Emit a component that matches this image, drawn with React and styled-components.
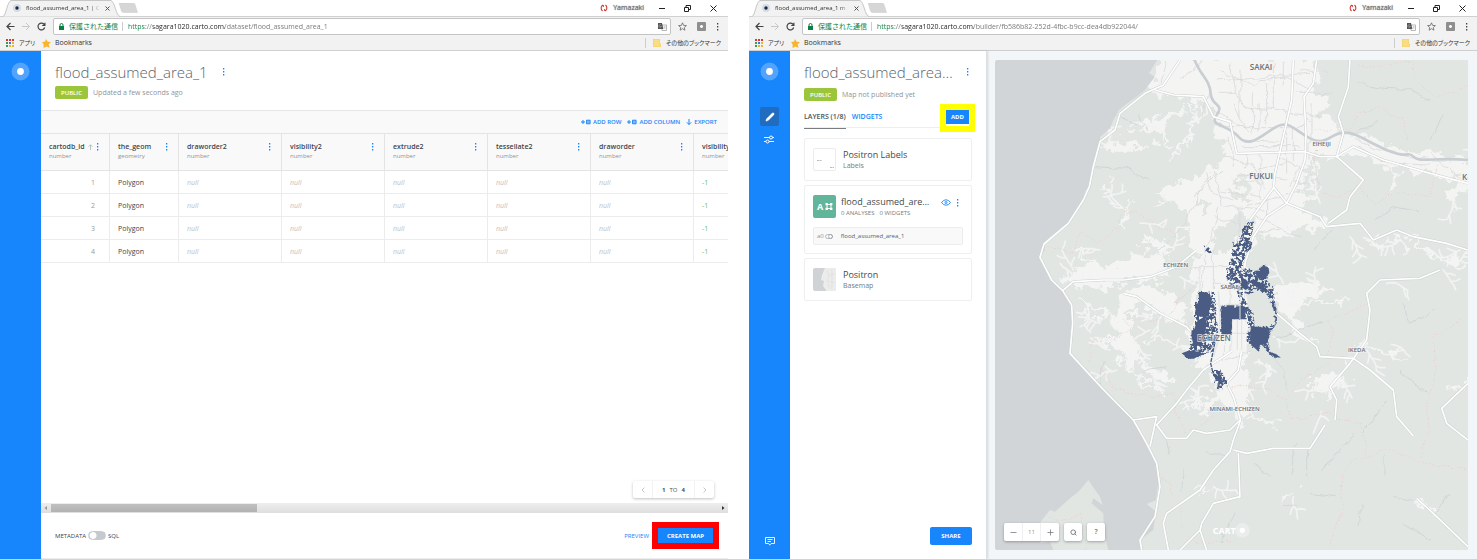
import React from 'react';
import styled, { createGlobalStyle } from 'styled-components';
import { Plus, Minus, Pencil, Search } from 'lucide-react';

const BLUE = '#1785fb';

const GlobalStyle = createGlobalStyle`
  * { box-sizing: border-box; }
  body { margin: 0; background: #fff; }
  body, button, input { font-family: "Open Sans", "Noto Sans CJK JP", sans-serif; font-size: 7px; line-height: 10px; color: #4a5459; }
  button { padding: 0; border: 0; background: none; display: inline-flex; align-items: center; justify-content: center; cursor: pointer; }
  h1, h2, h3, p, ul { margin: 0; padding: 0; font-weight: 400; }
  svg { display: block; flex: none; }
`;

/* ---------- layout ---------- */
const Screens = styled.div`
  display: grid;
  grid-template-columns: minmax(0, 1fr) minmax(0, 1fr);
  column-gap: 21px;
  min-height: 100vh;
`;
const BrowserWindow = styled.section`
  display: flex;
  flex-direction: column;
  min-width: 0;
  overflow: hidden;
`;
const Viewport = styled.div`
  flex: 1;
  display: flex;
  min-height: 0;
  background: ${p => p.$tone || '#fff'};
`;

/* ---------- browser chrome ---------- */
const TabStrip = styled.div`
  height: 16px;
  display: flex;
  align-items: center;
  padding: 0 11px 0 3px;
`;
const Tab = styled.div`
  position: relative;
  width: 117px;
  height: 17px;
  padding: 0 10px 0 10px;
  display: flex;
  align-items: center;
  gap: 5px;
`;
const TabShape = styled.svg`
  position: absolute;
  inset: 0;
`;
const TabTitle = styled.span`
  position: relative;
  flex: 1;
  white-space: nowrap;
  font-size: 6px;
  color: #333;
  mask-image: linear-gradient(90deg, #000 88%, transparent);
`;
const Favicon = styled.svg`
  position: relative;
`;
const ChromeButton = styled.button`
  position: relative;
  color: #555;
`;
const NewTabButton = styled(ChromeButton)`
  margin-left: -2px;
`;
const WindowControls = styled.div`
  margin-left: auto;
  display: flex;
  align-items: center;
  gap: 19px;
`;
const Profile = styled.button`
  gap: 5px;
  color: #777;
  text-shadow: 0 0 1px #555;
  margin-right: -5px;
`;
const AddressRow = styled.div`
  height: 20px;
  display: flex;
  align-items: center;
  gap: 7px;
  padding: 0 9px 0 6px;
  background: #f2f2f2;
  border-top: 1px solid #d0d0d0;
`;
const AddressActions = styled.div`
  display: flex;
  align-items: center;
  gap: 10px;
`;
const Omnibox = styled.label`
  flex: 1;
  min-width: 0;
  height: 17px;
  display: flex;
  align-items: center;
  gap: 5px;
  padding: 0 3px 0 5px;
  background: #fff;
  border: 1px solid #c4c4c4;
  border-radius: 2px;
`;
const Secure = styled.span`
  font-size: 7px;
  color: #0b8043;
  padding-right: 4px;
  border-right: 1px solid #ccc;
  line-height: 9px;
  white-space: nowrap;
`;
const UrlInput = styled.input`
  flex: 1;
  min-width: 0;
  border: 0;
  padding: 0;
  outline: none;
  font-size: 7px;
  color: #777;
  -webkit-text-fill-color: transparent;
  background: linear-gradient(90deg, #0b8043 0 18px, #777 18px 25px, #222 25px 97px, #747474 97px);
  background-clip: text;
  -webkit-background-clip: text;
`;
const BookmarkRow = styled.nav`
  height: 15px;
  display: flex;
  align-items: center;
  gap: 7px;
  padding: 0 7px 0 6px;
  background: #f2f2f2;
  border-bottom: 1px solid #cfcfcf;
`;
const Bookmark = styled.a`
  display: flex;
  align-items: center;
  gap: ${p => p.$gap || 5}px;
  color: #333;
  text-decoration: none;
  font-size: ${p => p.$size || 7}px;
  font-feature-settings: "palt";
`;
const OtherBookmarks = styled.div`
  margin-left: auto;
  padding-left: 7px;
  border-left: 1px solid #ccc;
`;

/* ---------- shared app parts ---------- */
const Rail = styled.aside`
  width: 41px;
  flex: none;
  background: ${BLUE};
  display: flex;
  flex-direction: column;
  align-items: center;
  padding: 11px 0 8px;
`;
const RailButton = styled.button`
  width: 19px;
  height: 19px;
  border-radius: 2px;
  color: #fff;
  background: ${p => (p.$active ? '#1f6cc0' : 'transparent')};
  margin-top: ${p => p.$top || 'auto'};
`;
const Title = styled.h1`
  font-size: 15px;
  line-height: 20px;
  font-weight: 300;
  color: #5a6469;
  white-space: nowrap;
  overflow: hidden;
  text-overflow: ellipsis;
`;
const TitleRow = styled.div`
  display: flex;
  align-items: center;
  gap: ${p => p.$gap}px;
  padding-right: 3px;
`;
const MetaRow = styled.div`
  display: flex;
  align-items: center;
  gap: 5px;
  margin-top: ${p => p.$top}px;
  color: #8e9599;
  white-space: nowrap;
`;
const Badge = styled.span`
  width: 33px;
  height: 13px;
  display: flex;
  align-items: center;
  justify-content: center;
  border-radius: 2px;
  background: #9bc63b;
  color: #fff;
  font-size: 6px;
  font-weight: 600;
`;
const SolidButton = styled.button`
  background: ${BLUE};
  color: #fff;
  font-size: ${p => p.$size || 6}px;
  font-weight: 700;
  width: ${p => p.$w}px;
  height: ${p => p.$h}px;
  border-radius: ${p => p.$radius || 0}px;
`;
const Highlight = styled.div`
  border: 6px solid ${p => p.$color};
  padding-bottom: ${p => p.$below || 0}px;
  background: #fff;
  display: flex;
`;
const IconButton = styled.button`
  color: ${BLUE};
`;

/* ---------- dataset page ---------- */
const Dataset = styled.main`
  flex: 1;
  min-width: 0;
  display: flex;
  flex-direction: column;
`;
const DatasetHeader = styled.header`
  height: 59px;
  padding: 11px 14px 0;
`;
const ActionBar = styled.div`
  height: 23px;
  display: flex;
  align-items: center;
  justify-content: flex-end;
  gap: 6px;
  padding-right: 11px;
  background: #f9f9f9;
  border-top: 1px solid #e6e6e6;
`;
const Action = styled.button`
  gap: 2px;
  color: ${BLUE};
  font-size: 6px;
  font-weight: 600;
`;
const TableArea = styled.div`
  flex: 1;
  min-height: 0;
  overflow: hidden;
  display: flex;
  flex-direction: column;
  align-items: flex-start;
`;
const DataTable = styled.table`
  table-layout: fixed;
  border-collapse: separate;
  border-spacing: 0;
  width: 756px;
`;
const HeadCell = styled.th`
  height: 38px;
  padding: 1px 10px 3px 8px;
  text-align: left;
  font-weight: 400;
  background: #f9f9f9;
  border: solid #e4e4e4;
  border-width: 1px 1px 1px 0;
`;
const HeadTop = styled.div`
  display: flex;
  align-items: center;
  justify-content: space-between;
`;
const ColumnName = styled.span`
  font-weight: 600;
  color: #3c464b;
  display: flex;
  align-items: center;
  gap: 3px;
`;
const ColumnType = styled.div`
  font-size: 6px;
  line-height: 9px;
  color: #8f9494;
`;
const Cell = styled.td`
  height: 23px;
  padding: 1px 8px 0;
  border: solid #ececec;
  border-width: 0 1px 1px 0;
  text-align: ${p => (p.$kind === 'id' ? 'right' : 'left')};
  padding-right: ${p => (p.$kind === 'id' ? 14 : 8)}px;
  font-style: ${p => (p.$kind === 'null' ? 'italic' : 'normal')};
  color: ${p => ({ id: '#969b9b', geom: '#3c464b', null: '#bfc2c4', num: '#5cc068' }[p.$kind])};
`;
const Pager = styled.div`
  margin: auto 14px 5px auto;
  display: flex;
  height: 17px;
  border-radius: 2px;
  background: #fff;
  box-shadow: 0 1px 3px rgba(0, 0, 0, 0.25);
`;
const PagerButton = styled.button`
  width: 19px;
  color: #b5babd;
`;
const PagerLabel = styled.span`
  width: 43px;
  border: solid #f2f2f2;
  border-width: 0 1px;
  display: flex;
  align-items: center;
  justify-content: center;
  gap: 4px;
  font-size: 6px;
`;
const ScrollTrack = styled.div`
  height: 10px;
  display: flex;
  align-items: center;
  padding: 0 3px;
  gap: 3px;
  background: linear-gradient(#eee, #dedede);
`;
const ScrollThumb = styled.div`
  flex: 31 1 0;
  height: 8px;
  background: linear-gradient(#c0c0c0, #b2b2b2);
`;
const ScrollRest = styled.div`
  flex: 69 1 0;
`;
const Footer = styled.footer`
  height: 46px;
  display: flex;
  align-items: center;
  padding: 0 9px 0 14px;
  font-size: 6px;
  border-bottom: 1px solid #ececec;
`;
const ToggleLabel = styled.label`
  display: flex;
  align-items: center;
  gap: 2px;
  font-weight: 500;
  color: #3c464b;
`;
const Toggle = styled.input`
  appearance: none;
  margin: 0;
  width: 18px;
  height: 9px;
  border-radius: 5px;
  border: 1px solid #c6cace;
  background: radial-gradient(circle at 4px 50%, #fff 3px, #c6cace 4px);
`;
const PreviewLink = styled.a`
  margin: 0 3px 0 auto;
  color: ${BLUE};
  text-decoration: none;
`;

/* ---------- builder page ---------- */
const Panel = styled.main`
  width: 197px;
  flex: none;
  display: flex;
  flex-direction: column;
  align-items: stretch;
  padding: 11px 14px 14px;
  background: #fff;
  border-right: 1px solid #dde0e3;
  box-shadow: 1px 0 2px rgba(0, 0, 0, 0.12);
`;
const Tabs = styled.div`
  display: flex;
  align-items: center;
  height: 28px;
  margin: 3px -3px 6px 0;
  background: linear-gradient(#eeeeee, #eeeeee) 0 23px / 100% 1px no-repeat;
`;
const TabButton = styled.button`
  align-self: flex-start;
  height: 25px;
  margin-right: 6px;
  padding: 3px 0 1px;
  font-weight: 600;
  color: ${p => (p.$active ? '#4a5459' : BLUE)};
  border-bottom: 1px solid ${p => (p.$active ? '#777d80' : 'transparent')};
`;
const Spacer = styled.span`
  flex: 1;
`;
const LayerList = styled.ul`
  list-style: none;
  display: flex;
  flex-direction: column;
  gap: 4px;
`;
const LayerCard = styled.li`
  border: 1px solid #eeeff0;
  border-radius: 2px;
  padding: 8px;
`;
const LayerHead = styled.div`
  display: flex;
  align-items: center;
  gap: ${p => p.$gap || 7}px;
  min-height: 25px;
`;
const LayerText = styled.div`
  flex: 1;
  min-width: 0;
`;
const LayerName = styled.h2`
  font-size: 9px;
  line-height: 13px;
  color: #3f494e;
  white-space: nowrap;
  overflow: hidden;
  text-overflow: ellipsis;
`;
const LayerNote = styled.p`
  font-size: ${p => p.$size || 7}px;
  line-height: 10px;
  color: #747c80;
  display: flex;
  gap: 5px;
  white-space: nowrap;
`;
const LayerIcons = styled.div`
  display: flex;
  align-items: center;
  gap: 5px;
  align-self: flex-start;
  height: 17px;
  padding: 0 4px 0 5px;
`;
const SourceRow = styled.button`
  width: 150px;
  height: 18px;
  margin-top: 8px;
  padding: 0 3px;
  justify-content: flex-start;
  gap: 8px;
  font-size: 6px;
  color: #555f64;
  background: #f9f9f9;
  border: 1px solid #ececec;
  border-radius: 2px;
`;
const SourceTag = styled.span`
  display: flex;
  align-items: center;
  gap: 1px;
  color: #8e9599;
`;
const PanelFooter = styled.div`
  display: flex;
  justify-content: flex-end;
  margin-top: auto;
`;
const MapFrame = styled.div`
  position: relative;
  flex: 1;
  margin: 9px 9px 9px 8px;
  border-radius: 2px;
  overflow: hidden;
  background: #d1d5d8;
  display: flex;
  align-items: flex-end;
`;
const MapDrawing = styled.svg`
  position: absolute;
  inset: 0;
  width: 100%;
  height: 100%;
`;
const MapControls = styled.div`
  position: relative;
  display: flex;
  gap: 5px;
  padding: 0 0 9px 9px;
`;
const ControlGroup = styled.div`
  display: flex;
  height: 18px;
  background: #fff;
  border-radius: 2px;
  box-shadow: 0 1px 3px rgba(0, 0, 0, 0.3);
`;
const ControlButton = styled.button`
  width: 18px;
  color: #6d757a;
  font-size: 7px;
  font-weight: 600;
`;
const ZoomLevel = styled.span`
  width: 19px;
  display: flex;
  align-items: center;
  justify-content: center;
  font-size: 6px;
  color: #8e9599;
  border: solid #f0f0f0;
  border-width: 0 1px;
`;

/* ---------- icons ---------- */
const Line = ({ d, w = 10, h = w, sw = 1, color = 'currentColor', fill = 'none' }) => (
  <svg width={w} height={h} viewBox={`0 0 ${w} ${h}`} fill={fill} stroke={color} strokeWidth={sw}>
    <path d={d} />
  </svg>
);
const Kebab = ({ color = BLUE }) => (
  <svg width="3" height="8" viewBox="0 0 3 8" fill={color}>
    <rect x="1" y="0" width="1.3" height="1.5" /><rect x="1" y="3" width="1.3" height="1.5" /><rect x="1" y="6" width="1.3" height="1.5" />
  </svg>
);
const GridPlus = () => (
  <svg width="10" height="6" viewBox="0 0 10 6" fill="none" stroke="currentColor">
    <path d="M0 3h4M2 1v4" /><path d="M5.500 1.200h3.600v3.600h-3.600z" fill="currentColor" fillOpacity=".55" strokeWidth=".9" />
  </svg>
);
const CartoMark = () => (
  <svg width="19" height="19" viewBox="0 0 19 19" fill="#fff">
    <circle cx="9.5" cy="9.5" r="9" fillOpacity=".25" /><circle cx="9.5" cy="9.5" r="3.4" />
  </svg>
);

function BrowserChrome({ tab, tail, url }) {
  return (
    <header>
      <TabStrip>
        <Tab>
          <TabShape width="117" height="17" viewBox="0 0 117 17">
            <path d="M0 16.5C3 16 4 2 8 .5H108C112 2 113 16 117 16.5" fill="#f2f2f2" stroke="#c6c6c6" />
          </TabShape>
          <Favicon width="8" height="8" viewBox="0 0 8 8"><circle cx="4" cy="4" r="4" fill="#d5dbe3" /><circle cx="4" cy="4" r="1.7" fill="#162945" /></Favicon>
          <TabTitle>{tab}{tail}</TabTitle>
          <ChromeButton aria-label="Close tab"><Line w={5} d="M.5.5l4 4m0-4l-4 4" /></ChromeButton>
        </Tab>
        <NewTabButton aria-label="New tab">
          <svg width="20" height="10" viewBox="0 0 20 10"><path d="M1 0H15Q16.500 0 17 1.500L19.500 9.500H5.500Q4 9.500 3.500 8Z" fill="#d6d6d6" stroke="#ccc" strokeWidth=".5" /></svg>
        </NewTabButton>
        <WindowControls>
          <Profile>
            <svg width="8" height="8" viewBox="0 0 8 8" fill="none" stroke="#d23a32" strokeWidth="1.1"><path d="M3 1C.6 1.800.6 5.500 2.500 7M5 7C7.400 6.200 7.400 2.500 5.500 1M3.300 3V1M4.700 5v2" /></svg>
            Yamazaki
          </Profile>
          <ChromeButton aria-label="Minimize"><Line w={7} d="M1 3.500h6" color="#222" /></ChromeButton>
          <ChromeButton aria-label="Restore"><Line w={7} d="M.5 2.500h4v4h-4zM2 2.500v-2h4.500v4H4.500" color="#222" /></ChromeButton>
          <ChromeButton aria-label="Close"><Line w={7} d="M.5.5l6 6m0-6l-6 6" color="#222" /></ChromeButton>
        </WindowControls>
      </TabStrip>
      <AddressRow>
        <ChromeButton aria-label="Back"><Line w={9} d="M8.500 4.500H1M4.500 1L1 4.500l3.500 3.500" sw={1.2} color="#444" /></ChromeButton>
        <ChromeButton aria-label="Forward"><Line w={8} h={9} d="M0 4.500h7M4 1l3.500 3.500L4 8" color="#c8c8c8" /></ChromeButton>
        <ChromeButton aria-label="Reload"><Line w={9} d="M7.300 2.700A3.400 3.400 0 1 0 7.700 5.500M7.900.8v2.700H5.200" sw={1.2} color="#444" /></ChromeButton>
        <Omnibox>
          <svg width="5" height="7" viewBox="0 0 5 7"><path d="M1 3V2a1.500 1.500 0 0 1 3 0v1" fill="none" stroke="#0b8043" /><rect y="3" width="5" height="4" fill="#0b8043" /></svg>
          <Secure>保護された通信</Secure>
          <UrlInput aria-label="Address" defaultValue={url} />
          <svg width="9" height="8" viewBox="0 0 9 8"><rect x="4" y="2" width="4.500" height="5.500" fill="#fff" stroke="#999" strokeWidth=".7" /><path d="M0 0h4l1.300 6H0z" fill="#555" /><path d="M3.200 2.200a1.300 1.300 0 1 0 .2 1.300H2.300M5.500 4h2.500M6.700 3.200L5.800 6M6 4.500l1.500 1.500" fill="none" stroke="#bbb" strokeWidth=".6" /></svg>
        </Omnibox>
        <AddressActions>
          <ChromeButton aria-label="Bookmark this page"><Line w={9} d="M4.500.8l1.100 2.600 2.800.2-2.100 1.900.6 2.700-2.400-1.500-2.400 1.500.6-2.700L.6 3.600l2.800-.2z" sw={.8} color="#666" /></ChromeButton>
          <ChromeButton aria-label="Extension"><svg width="9" height="9" viewBox="0 0 9 9"><rect width="9" height="9" rx="1" fill="#8f8f8f" /><path d="M4.500 3v3M3 4.500h3" stroke="#fff" strokeWidth="1.600" /></svg></ChromeButton>
          <ChromeButton aria-label="Menu"><Kebab color="#444" /></ChromeButton>
        </AddressActions>
      </AddressRow>
      <BookmarkRow>
        <Bookmark href="#apps" $size={6}>
          <svg width="8" height="8" viewBox="0 0 8 8">
            {['#d83a2f', '#d83a2f', '#d83a2f', '#30a058', '#3a78d8', '#eab52a', '#30a058', '#eab52a', '#eab52a'].map((c, i) => (
              <rect key={i} x={(i % 3) * 3} y={Math.floor(i / 3) * 3} width="2" height="2" fill={c} />
            ))}
          </svg>
          アプリ
        </Bookmark>
        <Bookmark href="#bookmarks" $gap={4}>
          <svg width="9" height="9" viewBox="0 0 9 9"><path d="M4 0l1.600 2.700 3.400.2-2.300 2.400L7.500 8.800 4.400 7.400 1.500 9l.2-3.500L0 3.300l3.100-.7z" fill="#f9b42b" /></svg>
          Bookmarks
        </Bookmark>
        <OtherBookmarks>
          <Bookmark href="#other" $size={6}>
            <svg width="8" height="8" viewBox="0 0 8 8"><path d="M.5 0h6v4l1 1v3h-7z" fill="#fbdc7f" stroke="#efc95c" strokeWidth=".6" /></svg>
            その他のブックマーク
          </Bookmark>
        </OtherBookmarks>
      </BookmarkRow>
    </header>
  );
}

/* ---------- dataset ---------- */
const columns = [
  ['cartodb_id', 'number', 'id', 69], ['the_geom', 'geometry', 'geom', 69], ['draworder2', 'number', 'null', 103],
  ['visibility2', 'number', 'null', 103], ['extrude2', 'number', 'null', 103], ['tessellate2', 'number', 'null', 103],
  ['draworder', 'number', 'null', 103], ['visibility', 'number', 'num', 103],
];
const cellText = (kind, row) => ({ id: row, geom: 'Polygon', null: 'null', num: '-1' }[kind]);

function DatasetPage() {
  return (
    <Viewport>
      <Rail><CartoMark /></Rail>
      <Dataset>
        <DatasetHeader>
          <TitleRow $gap={14}>
            <Title>flood_assumed_area_1</Title>
            <IconButton aria-label="Dataset options"><Kebab /></IconButton>
          </TitleRow>
          <MetaRow $top={4}><Badge>PUBLIC</Badge>Updated a few seconds ago</MetaRow>
        </DatasetHeader>
        <ActionBar>
          <Action><GridPlus />ADD ROW</Action>
          <Action><GridPlus />ADD COLUMN</Action>
          <Action><Line w={6} d="M3 0v5.500M.8 3.300L3 5.500l2.200-2.200" />EXPORT</Action>
        </ActionBar>
        <TableArea>
          <DataTable>
            <colgroup>{columns.map(c => <col key={c[0]} style={{ width: c[3] }} />)}</colgroup>
            <thead>
              <tr>
                {columns.map(([name, type, kind]) => (
                  <HeadCell key={name} scope="col">
                    <HeadTop>
                      <ColumnName>{name}{kind === 'id' && <Line w={5} h={6} d="M2.500 6V.8M.5 2.800l2-2 2 2" sw={.7} color="#a5aaad" />}</ColumnName>
                      <IconButton aria-label={`${name} options`}><Kebab /></IconButton>
                    </HeadTop>
                    <ColumnType>{type}</ColumnType>
                  </HeadCell>
                ))}
              </tr>
            </thead>
            <tbody>
              {[1, 2, 3, 4].map(row => (
                <tr key={row}>{columns.map(([name, , kind]) => <Cell key={name} $kind={kind}>{cellText(kind, row)}</Cell>)}</tr>
              ))}
            </tbody>
          </DataTable>
          <Pager>
            <PagerButton aria-label="Previous page"><Line w={4} h={6} d="M3.500.5L1 3l2.500 2.500" sw={.8} /></PagerButton>
            <PagerLabel><b>1</b><span>TO</span><b>4</b></PagerLabel>
            <PagerButton aria-label="Next page"><Line w={4} h={6} d="M.5.5L3 3 .5 5.500" sw={.8} /></PagerButton>
          </Pager>
        </TableArea>
        <ScrollTrack>
          <svg width="4" height="4" viewBox="0 0 4 4"><path d="M3 0v4L.5 2z" fill="#999" /></svg>
          <ScrollThumb />
          <ScrollRest />
          <svg width="4" height="4" viewBox="0 0 4 4"><path d="M1 0v4l2.500-2z" fill="#333" /></svg>
        </ScrollTrack>
        <Footer>
          <ToggleLabel>METADATA<Toggle type="checkbox" />SQL</ToggleLabel>
          <PreviewLink href="#preview">PREVIEW</PreviewLink>
          <Highlight $color="#ff0000"><SolidButton $w={55} $h={15} $size={6}>CREATE MAP</SolidButton></Highlight>
        </Footer>
      </Dataset>
    </Viewport>
  );
}

/* ---------- map ---------- */
const land = 'M472 30L447 70 465 80 435 120 410 140 375 165 357 180 340 210 330 235 300 262 298 300 285 320 280 350 272 400 255 425 245 465 205 520 150 560 132 580 135 600 120 620 130 650 155 692 188 722 215 760 220 800 212 840 210 910 250 960 300 1010 345 1060 400 1105 420 1150 440 1190 470 1240 475 1300 468 1350 440 1362 468 1385 460 1440 420 1470 430 1500H1410V20H472Z';
const peninsula = 'M160 1500L150 1475 120 1480 128 1460 110 1430 150 1380 165 1385 210 1345 235 1325 265 1290 300 1340 308 1365 280 1345 275 1360 310 1390 312 1450 325 1500Z';
const plains = [
  'M472 20H950L945 105 965 130 985 170 950 190 1010 215 1035 245 1100 262 1200 300 1300 315 1410 318V400L1290 370 1150 350 1060 310 1010 320 920 330 900 420 935 455 910 485 985 520 960 540 880 530 820 560 770 560 745 620 735 720 760 800 750 860 725 900 750 1000 735 1130 700 1080 640 1030 630 960 560 920 570 810 590 740 575 600 560 520 590 450 510 450 620 380 670 320 660 250 640 170 560 150 500 145 465 120 430 130 470 80Z',
  'M465 430L560 390 650 370 700 440 640 520 590 560 540 470Z',
  'M190 680L260 640 330 650 420 600 470 620 520 660 480 700 400 690 320 710 230 720Z',
  'M350 730L420 700 520 740 560 790 520 820 430 760 380 780 400 860 440 930 380 940 350 880Z',
  'M420 940L500 960 520 1000 450 990Z M590 1100L660 1020 690 1020 630 1080Z M470 560L500 570 480 660Z',
  'M830 720L900 690 990 720 930 740 880 810 950 880 900 870 850 800Z',
  'M930 1000L1000 960 1050 1000 1000 1010 990 1060 970 1020Z',
  'M1100 570L1170 560 1140 590 1150 610Z M1330 450L1404 370 1404 400 1350 470Z M1360 600l40 20-60 40Z',
  'M395 240L470 200 560 180 500 220 480 280 450 240Z M300 290L380 270 450 290 360 310Z',
];
const valleys = 'M560 160L590 180 560 280 510 330M460 190L500 280 520 290M310 430L330 390M390 450L370 560M300 650L220 590M240 740L300 800 380 790 450 800M340 780L350 860 290 870M350 870L360 930 450 940M380 940L420 1000 500 1020M560 900L480 860 440 870M620 1040L560 1080M700 1060L760 1060M730 1110L830 1120M760 940L820 970M1000 1010L930 1030M1040 940L1090 880 1220 930M1220 550L1310 620M860 760L980 750 1050 750M1360 1020L1404 1000M1180 550L1230 610M1240 1345L1310 1400M950 300L930 420M1190 360L1170 430M1280 610L1400 650M470 470L500 450M430 560L500 610M650 550L720 540M580 1330L640 1310M850 1360L890 1320';
const majorRoads = [
  'M540 30L490 105 435 130 360 190 345 240 300 275 280 350 268 410 250 450 205 520 132 582 120 622 155 690 188 722 215 765 218 820 210 910 300 1008 400 1110 440 1180 470 1240 480 1310 465 1400 420 1470 425 1500',
  'M880 30L875 150 850 260 825 370 820 415 750 510M950 30L940 100 912 140 918 250 915 330 890 400 860 460 800 500 760 560 735 640 730 760 725 900 715 960 680 1000 700 1040 722 1110 700 1170 690 1205 640 1260 600 1320 500 1390 490 1420 505 1500',
  'M465 120L520 135 610 140 640 200 690 215 710 310 915 305 960 320 1010 320 1060 290 1150 330 1290 370 1404 400',
  'M820 410L860 460 960 500 980 530 1080 520 1120 570 1190 540 1240 560 1340 580 1404 600',
  'M1050 30L1045 110 1015 200 1030 250 1010 320 1090 390 1050 440 1040 480 985 520',
  'M700 900L610 960 560 1020 530 1060 470 1125 500 1165 560 1165 580 1140 620 1150 690 1140 720 1110',
  'M400 1110L470 1100 450 1190M188 722L220 695 310 690 370 690 450 680 530 650 590 600',
  'M370 730L410 740 480 790 560 830 600 880M830 790L900 850 950 890 960 920 1060 925 1110 960 1180 1020 1190 1100 1240 1158',
  'M1140 690L1100 730 1110 780 1100 870 1050 940 990 1010 1010 1050 1005 1110M1140 690L1260 685 1320 660M700 1200L740 1210 820 1195 930 1195 975 1125M715 1210L720 1340 640 1360 605 1420 600 1440 620 1500M600 1440L540 1500',
  'M1404 1000L1325 1075 1340 1120 1404 1170M1250 1345L1300 1390 1404 1490',
];
const minorRoads = [
  'M650 130L710 130 740 170 870 190 960 200M660 60L770 110 780 90 860 80 930 120M700 160L735 230M620 130L610 200M760 130V250M800 100V220M730 270L850 280M740 310V350M780 310V450M830 320L900 350 870 410M640 360L670 470 790 480M670 320L750 340 800 420M620 370L640 430 700 450M580 440L640 370M480 600L560 520 600 420 660 360M600 770L620 590 640 540 660 470M580 650H680M600 650V790M640 600V720M670 770V930M690 690V900M640 700L750 700M600 760H740M610 820H740M500 30L480 100M540 90L620 30M850 30V110M900 60L990 70M690 40L710 130M780 160V240M680 230L910 230M860 190V370M720 370L860 390M900 420L740 470M760 500L900 560M700 560L840 540M715 500V640M590 700L520 760M780 860L850 960 860 1020M680 930L760 900M650 90L930 70M720 60V200M820 40V180M640 180L760 250M690 260L700 350M730 290H900M860 340L760 360M700 400L820 380M660 420L780 440M720 470V560M800 440V520M640 500L720 520M880 230V330M890 130H1000M930 160V330',
  'M1060 270L1180 310 1290 330 1404 330M1070 290L1170 340 1290 345M1290 310L1390 390M940 320L960 420M920 400L880 400M1010 210L1090 280',
];
const streams = 'M420 200L440 240M290 350L400 360 450 390M340 190L410 230M1080 100L1130 110 1210 115 1290 150M1330 200L1290 270M1070 250L1130 210M820 870L970 810M1130 510L1180 470 1260 485M940 600L990 540M1210 760L1230 820 1310 780M1090 1150L1160 1050M870 1270L890 1180M960 1270L1060 1150M760 1240L810 1280M920 1330L1010 1340M1180 1340L1240 1350M1310 1400L1350 1330M1210 1420L1290 1470M660 1480L710 1380M430 960L500 950M310 930L300 1010M500 1170L510 1220M550 1260L545 1320M620 1200L680 1220M1200 960L1280 1030M1090 1370L1080 1430M1155 1220V1280M890 1360L850 1370M920 1200V1280';
const borders = 'M1070 40L1110 55 1170 40 1240 40 1250 90 1310 140 1404 110M1040 250L1080 190 1140 170 1210 210 1220 270 1190 300M920 210L940 240 1000 240M950 300L930 380 960 430 1010 440 1070 410 1130 460 1200 420 1290 440 1310 340M135 590L220 610 240 540 290 580 360 530 370 470 440 510 520 550 570 590M270 930L280 870 400 840 370 810 500 810 540 740M300 950L340 1010 420 1040 520 1030 550 1150 640 1100M690 1010L780 1010 860 1050 900 990 980 940 1000 850 980 810 1100 770M860 1050L870 1110 970 1090 1080 1120 1100 1220M990 1480L1030 1370 1020 1290 1040 1250 1100 1220 1160 1195 1240 1230 1280 1240 1404 1260M1260 1220L1290 1120 1280 1050 1310 970 1300 860 1390 810M130 1400L200 1410 240 1390 255 1500M470 1280L510 1300 550 1430 580 1480 700 1470';
const rivers = 'M583 28C600 75 630 90 632 130S675 160 650 195 680 220 715 260 790 250 830 230 880 240 930 265 990 250 1030 248 1090 270 1160 300 1220 300 1240 320 1300 320 1404 330';
const floods = [
  'M745 515L762 515 758 545 750 570 757 580 738 610 730 640 722 665 730 690 700 715 680 690 682 650 695 630 700 580 720 565 730 535Z',
  'M700 660L740 655 770 665 795 640 808 660 800 690 820 710 825 760 832 785 820 780 805 735 780 720 740 735 730 720 705 715Z',
  'M610 585L625 595 637 605 630 612 618 602Z',
  'M705 690L722 700 735 750 760 790 765 840 748 830 740 790 722 760Z',
  'M595 725L645 725 650 800 655 850 640 900 600 920 560 925 545 910 570 900 575 860 575 835 585 830 585 760 597 750Z',
  'M660 770L735 765 738 805 697 808 697 855 664 852Z',
  'M735 850L755 840 765 830 810 830 825 815 822 790 832 785 830 820 812 850 805 880 812 905 842 922 825 925 795 895 785 885 778 905 752 885 735 870Z',
  'M636 960L660 960 680 990 684 1010 670 1000 667 1018 655 1015 643 990Z',
];
const solids = [
  'M597 727H622V732H630L634 765 626 780 628 800H600L600 793H587V762H594V752H597Z',
  'M664 768L680 770V766H703V774L722 766 735 770V804H740V808L696 808 694 852 666 854 664 820Z',
  'M752 835L768 830 806 834 808 860 800 880 780 885 776 905 755 885 750 865Z',
  'M765 662L785 662 790 645 806 655 808 670 795 682 790 690 770 680Z',
  'M590 815L612 800 620 812 616 850 605 880 590 888 580 885 575 860 575 843 582 840Z',
  'M545 910L565 902 600 905 610 914 595 918 582 926 565 926Z',
  'M733 590L740 560 748 580ZM738 610L754 578 754 595Z',
  'M722 680L740 690 745 715 735 720 725 705ZM748 695L765 690 790 705 800 725 780 718Z',
  'M652 970L664 975 664 1000 656 1006Z',
  'M792 892L806 905 828 912 842 923 830 922 812 914Z',
];
const labels = [
  [783, 59, 24, 'SAKAI'], [783, 386, 24, 'FUKUI'], [965, 288, 18, 'EIHEIJI'], [527, 651, 18, 'ECHIZEN'], [689, 717, 18, 'SABAE'],
  [642, 874, 24, 'ECHIZEN'], [1070, 907, 18, 'IKEDA'], [704, 1084, 18, 'MINAMI-ECHIZEN'],
];

/* Small branching valleys that fan out from points in the hills. */
function branchingValleys(starts) {
  let seed = 11;
  const rnd = () => { seed = (seed * 16807) % 2147483647; return seed / 2147483647; };
  let d = '';
  const grow = (x, y, angle, steps) => {
    d += `M${Math.round(x)} ${Math.round(y)}`;
    for (let i = 0; i < steps; i += 1) {
      angle += (rnd() - 0.5) * 0.9;
      x += Math.cos(angle) * 14;
      y += Math.sin(angle) * 14;
      d += `L${Math.round(x)} ${Math.round(y)}`;
      if (steps > 2 && rnd() > 0.35) {
        grow(x, y, angle + (rnd() > 0.5 ? 1 : -1), steps - 3);
        d += `M${Math.round(x)} ${Math.round(y)}`;
      }
    }
  };
  starts.forEach(([x, y]) => grow(x, y, rnd() * 6.28, 5));
  return d;
}
const twigs = branchingValleys([
  [560, 220], [480, 240], [320, 300], [310, 440], [380, 480], [420, 520], [300, 600], [220, 660], [260, 760], [300, 820], [330, 900],
  [400, 880], [450, 840], [500, 780], [520, 900], [400, 960], [460, 980], [350, 960], [540, 1060], [600, 1080], [240, 700], [180, 640],
  [520, 600], [540, 680], [460, 740], [850, 700], [900, 780], [950, 720], [880, 560], [800, 940], [760, 1050], [760, 1100], [980, 1020],
  [1030, 980], [1100, 900], [1150, 600], [1200, 570], [1370, 640], [1380, 600], [1360, 440], [1390, 300], [960, 460], [1160, 700],
  [640, 1310], [880, 1340], [1330, 660], [820, 860], [940, 1150], [470, 1350], [200, 1350], [290, 1350], [1230, 920], [1050, 560],
]);

function RegionMap() {
  return (
    <MapDrawing viewBox="-15 30 1419 1470" preserveAspectRatio="xMidYMid slice">
      <defs>
        <filter id="rugged" x="-5%" y="-5%" width="110%" height="110%">
          <feTurbulence type="fractalNoise" baseFrequency="0.03" numOctaves="4" seed="4" />
          <feDisplacementMap in="SourceGraphic" scale="75" xChannelSelector="R" yChannelSelector="G" />
        </filter>
        <filter id="wobble" x="-5%" y="-5%" width="110%" height="110%">
          <feTurbulence type="fractalNoise" baseFrequency="0.02" numOctaves="3" seed="9" />
          <feDisplacementMap in="SourceGraphic" scale="26" xChannelSelector="R" yChannelSelector="G" />
        </filter>
        <filter id="speckle" x="-5%" y="-5%" width="110%" height="110%">
          <feTurbulence type="fractalNoise" baseFrequency="0.11" numOctaves="3" seed="7" result="n" />
          <feColorMatrix in="n" values="0 0 0 0 0  0 0 0 0 0  0 0 0 0 0  8 0 0 0 -3.2" result="m" />
          <feDisplacementMap in="SourceGraphic" in2="n" scale="14" xChannelSelector="R" yChannelSelector="G" result="d" />
          <feComposite in="d" in2="m" operator="in" />
        </filter>
        <clipPath id="coast"><path d={land} /></clipPath>
      </defs>
      <path d={land} fill="#e1e6e3" />
      <path d={peninsula} fill="#e1e6e3" />
      <g clipPath="url(#coast)">
        <g filter="url(#rugged)">
          {plains.map((d, i) => <path key={i} d={d} fill="#f4f4f3" />)}
          <path d={valleys} fill="none" stroke="#f3f4f3" strokeWidth="9" />
        </g>
        <g fill="#e1e6e3" filter="url(#rugged)">
          <path d="M690 390L740 380 770 410 730 430ZM600 440L640 450 600 490ZM680 430H750V450H690ZM640 540L720 490 760 500 720 560 680 610 640 600ZM745 730L800 725 830 790 815 830 770 820ZM520 560L570 540 590 610 560 640Z" />
        </g>
        <path d={twigs} fill="none" stroke="#f2f3f2" strokeWidth="5" strokeLinecap="round" />
      </g>
      <path d="M740 735L795 728 822 770 830 800 810 828 770 828 745 780Z" fill="#e1e6e3" />
      <g fill="none" filter="url(#wobble)">
        <path d={streams} stroke="#ccd1d5" strokeWidth="2.5" />
        <path d={borders} stroke="#ebcdcd" strokeWidth="3" strokeDasharray="3 5" />
        {minorRoads.map((d, i) => <path key={i} d={d} stroke="#d8dada" strokeWidth="2.5" />)}
      </g>
      <path d={rivers} fill="none" stroke="#c9ced3" strokeWidth="8" />
      <g fill="none" strokeLinejoin="round">
        {majorRoads.map((d, i) => <path key={i} d={d} stroke="#cdd1d1" strokeWidth="8" />)}
        {majorRoads.map((d, i) => <path key={i} d={d} stroke="#fff" strokeWidth="5" />)}
      </g>
      <g fill="#4a5c84" filter="url(#speckle)">{floods.map((d, i) => <path key={i} d={d} />)}</g>
      <g fill="#4a5c84">{solids.map((d, i) => <path key={i} d={d} />)}</g>
      <path d="M697 810H735L740 850V905H697Z" fill="#f4f4f3" />
      <path d="M712 810V900M725 810V900M697 850H738" fill="none" stroke="#d8dada" strokeWidth="2" />
      <path d="M720 700V808" fill="none" stroke="#e3e6e8" strokeWidth="3" />
      <path d="M655 725L660 800 655 870 640 920" fill="none" stroke="#e3e6e8" strokeWidth="5" />
      <path d="M644 880L632 940 638 965" fill="none" stroke="#4a5c84" strokeWidth="4" strokeDasharray="12 3" />
      <g fill="#66717b" stroke="#f4f4f3" strokeWidth="4" strokeOpacity=".8" paintOrder="stroke" textAnchor="middle" fontWeight="600">
        {labels.map(([x, y, size, text], i) => <text key={i} x={x} y={y} fontSize={size}>{text}</text>)}
        <text x="1394" y="389" fontSize="24">K</text>
      </g>
      <g fill="#fff">
        <text x="638" y="1451" fontSize="27" fontWeight="700">CART</text>
        <circle cx="727" cy="1441" r="22" fillOpacity=".3" />
        <circle cx="727" cy="1441" r="8" />
      </g>
    </MapDrawing>
  );
}

/* ---------- builder ---------- */
const LabelsThumb = () => (
  <svg width="23" height="23" viewBox="0 0 23 23"><rect x=".5" y=".5" width="22" height="22" rx="1.500" fill="#fff" stroke="#ebebeb" /><path d="M4 12.500h5M17 19.500h4" stroke="#bbb" strokeDasharray="2 .5" /></svg>
);
const PolygonThumb = () => (
  <svg width="23" height="23" viewBox="0 0 23 23">
    <rect width="23" height="23" rx="2" fill="#61b59a" />
    <text x="4" y="15" fontSize="9" fontWeight="700" fill="#fff">A</text>
    <path d="M14 9.500h4v4h-4z" fill="none" stroke="#fff" />
    <path d="M12.500 8h2.400v2.200h-2.400zM17 8h2.400v2.200H17zM12.500 12.800h2.400V15h-2.400zM17 12.800h2.400V15H17z" fill="#fff" />
  </svg>
);
const BasemapThumb = () => (
  <svg width="23" height="23" viewBox="0 0 23 23"><rect width="23" height="23" rx="2" fill="#cfd3d6" /><path d="M12 0L9 7l-1 5 3 1-1 5 3 4v1h8a2 2 0 0 0 2-2V2a2 2 0 0 0-2-2z" fill="#ececeb" /><path d="M14 2l2 6-2 5 3 8M16 8l6-3M15 13l7 2M19 1v20" fill="none" stroke="#dcdedf" strokeWidth=".7" /></svg>
);

function BuilderPage() {
  return (
    <Viewport $tone="#f2f6f9">
      <Rail>
        <CartoMark />
        <RailButton $active $top="26px" aria-label="Edit"><Pencil size={10} fill="#fff" strokeWidth={1} /></RailButton>
        <RailButton $top="4px" aria-label="Settings">
          <svg width="11" height="9" viewBox="0 0 11 9" fill="none" stroke="#fff"><path d="M0 2.500h5.500M8.500 2.500H10M0 6.500h2M5 6.500h5" /><circle cx="7" cy="2.500" r="1.500" /><circle cx="3.500" cy="6.500" r="1.500" /></svg>
        </RailButton>
        <RailButton aria-label="Messages">
          <svg width="10" height="9" viewBox="0 0 10 9" fill="none" stroke="#fff" strokeWidth=".9"><path d="M.5.5h9v6H6L4.800 8.200 3.700 6.500H.5zM2.500 2.500h5M2.500 4.500h3.500" /></svg>
        </RailButton>
      </Rail>
      <Panel>
        <TitleRow $gap={10}>
          <Title>flood_assumed_area_1 map</Title>
          <IconButton aria-label="Map options"><Kebab /></IconButton>
        </TitleRow>
        <MetaRow $top={6}><Badge>PUBLIC</Badge>Map not published yet</MetaRow>
        <Tabs>
          <TabButton $active>LAYERS (1/8)</TabButton>
          <TabButton>WIDGETS</TabButton>
          <Spacer />
          <Highlight $color="#ffff00" $below={2}><SolidButton $w={23} $h={14} $size={6}>ADD</SolidButton></Highlight>
        </Tabs>
        <LayerList>
          <LayerCard>
            <LayerHead>
              <LabelsThumb />
              <LayerText><LayerName>Positron Labels</LayerName><LayerNote>Labels</LayerNote></LayerText>
            </LayerHead>
          </LayerCard>
          <LayerCard>
            <LayerHead $gap={5}>
              <PolygonThumb />
              <LayerText><LayerName>flood_assumed_area_1</LayerName><LayerNote $size={6}><span>0 ANALYSES</span><span>0 WIDGETS</span></LayerNote></LayerText>
              <LayerIcons>
                <IconButton aria-label="Toggle layer">
                  <svg width="10" height="7" viewBox="0 0 10 7" fill="none" stroke="currentColor" strokeWidth=".9"><path d="M.5 3.500Q5-2 9.500 3.500 5 9 .5 3.500z" /><circle cx="5" cy="3.500" r="1" /></svg>
                </IconButton>
                <IconButton aria-label="Layer options"><Kebab /></IconButton>
              </LayerIcons>
            </LayerHead>
            <SourceRow>
              <SourceTag>a0<svg width="8" height="5" viewBox="0 0 8 5" fill="none" stroke="currentColor" strokeWidth=".6"><rect x=".5" y=".5" width="7" height="4" rx="2" /><circle cx="5.500" cy="2.500" r="2" /></svg></SourceTag>
              flood_assumed_area_1
            </SourceRow>
          </LayerCard>
          <LayerCard>
            <LayerHead>
              <BasemapThumb />
              <LayerText><LayerName>Positron</LayerName><LayerNote>Basemap</LayerNote></LayerText>
            </LayerHead>
          </LayerCard>
        </LayerList>
        <PanelFooter><SolidButton $w={42} $h={18} $size={6} $radius={2}>SHARE</SolidButton></PanelFooter>
      </Panel>
      <MapFrame>
        <RegionMap />
        <MapControls>
          <ControlGroup>
            <ControlButton aria-label="Zoom out"><Minus size={9} /></ControlButton>
            <ZoomLevel>11</ZoomLevel>
            <ControlButton aria-label="Zoom in"><Plus size={9} /></ControlButton>
          </ControlGroup>
          <ControlGroup><ControlButton aria-label="Search"><Search size={7} strokeWidth={3} /></ControlButton></ControlGroup>
          <ControlGroup><ControlButton>?</ControlButton></ControlGroup>
        </MapControls>
      </MapFrame>
    </Viewport>
  );
}

export default function App() {
  return (
    <>
      <GlobalStyle />
      <Screens>
        <BrowserWindow>
          <BrowserChrome tab="flood_assumed_area_1" tail=" | C" url="https://sagara1020.carto.com/dataset/flood_assumed_area_1" />
          <DatasetPage />
        </BrowserWindow>
        <BrowserWindow>
          <BrowserChrome tab="flood_assumed_area_1" tail=" m" url="https://sagara1020.carto.com/builder/fb586b82-252d-4fbc-b9cc-dea4db922044/" />
          <BuilderPage />
        </BrowserWindow>
      </Screens>
    </>
  );
}
